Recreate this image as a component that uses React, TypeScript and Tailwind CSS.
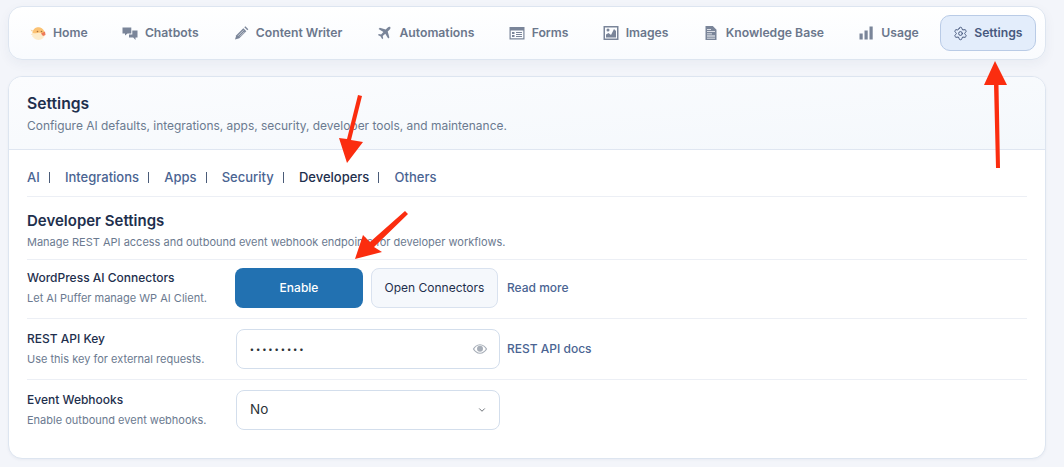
import { ChevronDownIcon, SettingsIcon } from "lucide-react";
import type { ReactNode } from "react";

const PufferIcon = () => (
  <svg viewBox="0 0 16 16" className="h-4 w-4">
    <path d="M.5 4.500l2.500 1-1 1.500 1.500.5L1 9.500l2.500.5-1 2 2.500-1z" fill="#f8cf94" />
    <ellipse cx="8.500" cy="8.800" rx="6.500" ry="6.200" fill="#fdeccb" />
    <path d="M2.500 7.500C3.500 3.500 6 2.300 8.500 2.300s5 1.500 6 5.200c-2 1.200-3 .8-4.500.3-2-.5-5.500 1.700-7.500-.3z" fill="#fbc274" />
    <circle cx="7.500" cy="6.500" r=".8" fill="#a8703a" />
    <circle cx="11.500" cy="6.500" r=".8" fill="#a8703a" />
    <path d="M11 8.500l4-2 .5 3.500-2.500 1z" fill="#ee7a58" />
  </svg>
);

const ChatIcon = () => (
  <svg viewBox="0 0 16 16" className="h-4 w-4" fill="currentColor">
    <path d="M.5 2.500h8.800v6H5.500l-2.500 2v-2H.5z" />
    <path d="M10.300 5.500h5.200v7h-2V15l-2.300-2.500H7V9.500h3.300z" />
  </svg>
);

const PencilIcon = () => (
  <svg viewBox="0 0 16 16" className="h-4 w-4" fill="currentColor">
    <path d="M10.300 3.200l3 3-7 7-4.300 1.300 1.300-4.300z" />
    <path d="M11.300 2.200l1-1 3 3-1 1z" />
    <path d="M5 10.800l5.500-5.500M6.800 11.500l4.700-4.700" stroke="#fff" strokeWidth=".6" />
  </svg>
);

const PlaneIcon = () => (
  <svg viewBox="0 0 16 16" className="h-4 w-4" fill="currentColor">
    <path d="M14.500 2c-.8-.7-2-.3-3 .7L9.700 4.500 3.800 2.800 2.600 4l4.800 2.900-2.300 2.600-2.200-.5-1 1 2.800 1.500 1.500 2.800 1-1-.5-2.200 2.600-2.300 2.900 4.800 1.200-1.200-1.700-5.900 1.800-1.800c1-1 1.400-2.200.5-3z" />
  </svg>
);

const FormIcon = () => (
  <svg viewBox="0 0 16 16" className="h-4 w-4" fill="currentColor">
    <path
      fillRule="evenodd"
      d="M.5 2h15v12.500H.5zM1.700 5.500v7.800h12.600V5.500zM3 7h2.500v2H3zM3 10h2.500v2H3zM7 7h6v1H7zM7 9h6v1H7zM7 11h6v1H7z"
    />
  </svg>
);

const ImageIcon = () => (
  <svg viewBox="0 0 16 16" className="h-4 w-4" fill="currentColor">
    <path fillRule="evenodd" d="M.5 1h15v14H.5zM2 2.500v11h12v-11z" />
    <path d="M3 12.500v-3l2.500-1.500 2.500 2 3-6 2 2v6.500z" />
    <circle cx="5" cy="5" r="1.500" />
  </svg>
);

const DocIcon = () => (
  <svg viewBox="0 0 16 16" className="h-4 w-4" fill="currentColor">
    <path
      fillRule="evenodd"
      d="M2.500 1H9.800l3.700 3.700V15h-11zM4 4.800h4V4H4zM4 7h8V6.200H4zM4 9.200h5v-.8H4zM4 11.400h8v-.8H4zM4 13.500h8v-.8H4z"
    />
  </svg>
);

const BarsIcon = () => (
  <svg viewBox="0 0 16 16" className="h-4 w-4" fill="currentColor">
    <path d="M1.500 8.500h3.200V14.500H1.500zM6.500 5.500h3.200v9H6.500zM11.500 1.500h3.200v13h-3.200z" />
  </svg>
);

const EyeIcon = () => (
  <svg viewBox="0 0 16 16" className="h-4 w-4" fill="currentColor">
    <path
      fillRule="evenodd"
      d="M8 3.200c3.200 0 5.800 2.200 7.200 4.800C13.800 10.600 11.200 12.800 8 12.800S2.200 10.600.8 8C2.200 5.400 4.800 3.200 8 3.200zM2.200 8C3.400 10 5.500 11.700 8 11.700S12.600 10 13.800 8C12.600 6 10.500 4.300 8 4.300S3.400 6 2.200 8z"
    />
    <circle cx="8" cy="7.800" r="3" />
  </svg>
);

const navItems = [
  { label: "Home", icon: <PufferIcon /> },
  { label: "Chatbots", icon: <ChatIcon /> },
  { label: "Content Writer", icon: <PencilIcon /> },
  { label: "Automations", icon: <PlaneIcon /> },
  { label: "Forms", icon: <FormIcon /> },
  { label: "Images", icon: <ImageIcon /> },
  { label: "Knowledge Base", icon: <DocIcon /> },
  { label: "Usage", icon: <BarsIcon /> },
];

const tabs = ["AI", "Integrations", "Apps", "Security", "Developers", "Others"];

interface SettingRowProps {
  title: string;
  hint: string;
  className: string;
  children: ReactNode;
}

const SettingRow = ({ title, hint, className, children }: SettingRowProps) => (
  <div className={`flex items-center ${className}`}>
    <div className="w-[208px] shrink-0">
      <div className="text-[12px] leading-[16px] font-medium text-[#1e2f4d]">{title}</div>
      <div className="mt-[5px] text-[11px] leading-[15px] text-[#6b7a90]">{hint}</div>
    </div>
    {children}
  </div>
);

export default function App() {
  return (
    <div
      className="relative h-[467px] w-[1064px] overflow-hidden bg-[#f3f5fa] px-2 pt-[6px]"
      style={{ fontFamily: "Inter, sans-serif" }}
    >
      {/* Menu principal */}
      <nav className="flex h-[54px] w-[1038px] items-center justify-between rounded-[14px] border border-[#dde5f0] bg-gradient-to-b from-white to-[#f9fbfe] pr-[9px] pl-[8px] shadow-[0_4px_12px_rgba(30,50,90,0.05)]">
        {navItems.map((item) => (
          <a key={item.label} className="flex items-center gap-[7px] px-[13px] text-[12.2px] font-semibold text-[#6b778c]">
            <span className="text-[#7a8599]">{item.icon}</span>
            {item.label}
          </a>
        ))}
        <a className="flex h-[36px] w-[96px] items-center justify-center gap-[6px] rounded-[10px] border border-[#b9cbe6] bg-[#e3edfb] text-[12.2px] font-semibold text-[#47597e]">
          <SettingsIcon className="h-[15px] w-[15px]" strokeWidth={1.6} />
          Settings
        </a>
      </nav>

      {/* Painel */}
      <main className="mt-[16px] h-[383px] w-[1038px] overflow-hidden rounded-[14px] border border-[#dde5f0] bg-white shadow-[0_1px_3px_rgba(30,50,90,0.05)]">
        <header className="h-[73px] border-b border-[#dfe6f1] bg-gradient-to-br from-[#fbfcfe] to-[#f4f8fc] px-[18px] pt-[17px]">
          <h1 className="text-[15.7px] leading-[20px] font-semibold text-[#1e2f4d]">Settings</h1>
          <p className="mt-[4px] text-[11.95px] leading-[16px] text-[#6b7a90]">
            Configure AI defaults, integrations, apps, security, developer tools, and maintenance.
          </p>
        </header>

        <div className="px-[18px]">
          <div className="flex h-[47px] items-end border-b border-[#eceff5] pb-[9px] text-[13px] leading-[20px] font-medium">
            {tabs.map((tab, index) => (
              <span key={tab} className="flex items-center">
                <span className={tab === "Developers" ? "text-[#1e2f4d]" : "text-[#4a6492]"}>{tab}</span>
                {index < tabs.length - 1 && (
                  <span className="mr-[15.2px] ml-[9px] h-[11px] w-[1px] bg-[#4a5b78]" />
                )}
              </span>
            ))}
          </div>

          <h2 className="mt-[14px] text-[15px] leading-[20px] font-semibold text-[#1e2f4d]">Developer Settings</h2>
          <p className="mt-[4px] mb-[9px] text-[11px] leading-[15px] text-[#6b7a90]">
            Manage REST API access and outbound event webhook endpoints for developer workflows.
          </p>

          <SettingRow
            title="WordPress AI Connectors"
            hint="Let AI Puffer manage WP AI Client."
            className="border-t border-b border-[#eceff5] pt-[8px] pb-[10px]"
          >
            <button className="h-[40px] w-[128px] rounded-[8px] bg-[#2271b1] text-[12px] font-medium text-white">Enable</button>
            <button className="ml-[8px] h-[40px] w-[127px] rounded-[8px] border border-[#d9e2ef] bg-[#f5f8fc] text-[12px] font-normal text-[#1e2f4d]">
              Open Connectors
            </button>
            <a className="ml-[9px] text-[12px] font-medium text-[#4a6492]">Read more</a>
          </SettingRow>

          <SettingRow
            title="REST API Key"
            hint="Use this key for external requests."
            className="border-b border-[#eceff5] py-[10px]"
          >
            <div className="ml-px flex h-[40px] w-[264px] items-center justify-between rounded-[8px] border border-[#d3deec] pr-[11px] pl-[13px]">
              <span className="text-[8px] font-bold tracking-[2.400px] text-[#2c3338]">•••••••••</span>
              <span className="text-[#a7aeb8]">
                <EyeIcon />
              </span>
            </div>
            <a className="ml-[7px] text-[12px] font-medium text-[#4a6492]">REST API docs</a>
          </SettingRow>

          <SettingRow title="Event Webhooks" hint="Enable outbound event webhooks." className="py-[10px]">
            <div className="ml-px flex h-[40px] w-[264px] items-center justify-between rounded-[8px] border border-[#d3deec] pr-[12px] pb-[1px] pl-[13px]">
              <span className="text-[13.5px] text-[#2c3338]">No</span>
              <ChevronDownIcon className="h-[10px] w-[10px] text-[#50575e]" strokeWidth={2} />
            </div>
          </SettingRow>
        </div>
      </main>

      {/* Flechas de anotação */}
      <svg viewBox="0 0 1064 467" className="absolute inset-0 h-[467px] w-[1064px]" fill="#fb2d0f">
        <path d="M995 61L1007 85H998.500L1000 168H996L994 85H984z" />
        <path d="M358 95L362 96L351 140L363 142L347 163L339 138L347 139z" />
        <path d="M405 211L408 214L374 247L382 252L355 259L363 235L370 242z" />
      </svg>
    </div>
  );
}
